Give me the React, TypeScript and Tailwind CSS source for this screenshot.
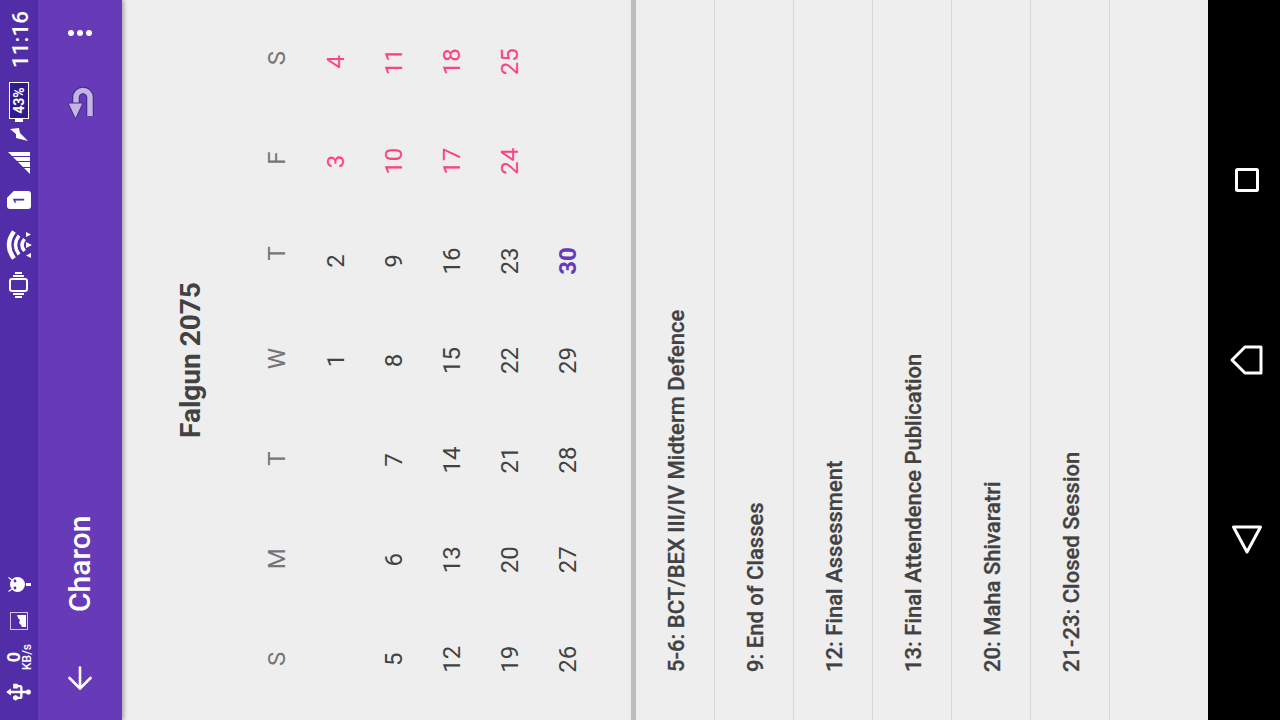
import React from "react";
import { ArrowLeft } from "lucide-react";
import { MdUsb } from "react-icons/md";

const WEEK = ["S", "M", "T", "W", "T", "F", "S"];

const DAYS: (number | null)[] = [
  null, null, null, 1, 2, 3, 4,
  5, 6, 7, 8, 9, 10, 11,
  12, 13, 14, 15, 16, 17, 18,
  19, 20, 21, 22, 23, 24, 25,
  26, 27, 28, 29, 30, null, null,
];

const EVENTS = [
  "5-6: BCT/BEX III/IV Midterm Defence",
  "9: End of Classes",
  "12: Final Assessment",
  "13: Final Attendence Publication",
  "20: Maha Shivaratri",
  "21-23: Closed Session",
];

function StatusBar() {
  return (
    <div className="flex h-[38px] shrink-0 items-center bg-[#512da8] pl-[14px] text-white">
      <MdUsb className="h-[28px] w-[28px] shrink-0" />
      <div className="ml-[6px] flex w-[30px] flex-col items-center">
        <span className="text-[18px] font-bold leading-[15px]">0</span>
        <span className="text-[12px] font-medium leading-[12px]">KB/s</span>
      </div>
      <svg viewBox="0 0 18 18" className="ml-[12px] h-[18px] w-[18px] shrink-0" fill="none">
        <rect x="0.5" y="0.5" width="17" height="17" stroke="#d1c4e9" />
        <path d="M3 16 V12 L5 11 L7 9 L10 10 L12 8 L15 7 V16 Z" fill="#fff" />
      </svg>
      {/* debug bridge droid */}
      <svg viewBox="0 0 24 26" className="ml-[15px] h-[26px] w-[24px] shrink-0" fill="#fff">
        <circle cx="12.5" cy="11.5" r="7.5" />
        <circle cx="9" cy="9" r="1.4" fill="#512da8" />
        <circle cx="16" cy="9" r="1.4" fill="#512da8" />
        <path d="M8 6 L5.5 2.5 M17 6 L19.5 2.5" stroke="#fff" strokeWidth="1.2" />
        <rect x="11" y="20" width="3" height="5" />
      </svg>

      {/* vibrate */}
      <svg viewBox="0 0 30 28" className="ml-[273px] h-[28px] w-[30px] shrink-0" fill="none" stroke="#fff" strokeWidth="2">
        <rect x="9" y="5" width="12" height="17" rx="2" />
        <path d="M6 8 V19 M3 10 V17 M24 8 V19 M27 10 V17" />
      </svg>
      {/* wifi with data arrows */}
      <svg viewBox="0 0 30 28" className="ml-[10px] h-[28px] w-[30px] shrink-0" fill="none" stroke="#fff">
        <path d="M1.5 9 Q15 -1 28.5 9" strokeWidth="4.5" />
        <path d="M5.5 14 Q15 7 24.5 14" strokeWidth="3.5" />
        <path d="M9 19.5 Q15 14.5 21 19.5" strokeWidth="3.5" />
        <path d="M23 21 H28 L25.5 26 Z M12 21 H18 L15 27 Z M2 26 H7 L4.5 21 Z" fill="#fff" stroke="none" />
      </svg>
      <div className="ml-[21px] flex h-[24px] w-[18px] shrink-0 items-center justify-center rounded-[3px] bg-white text-[14px] font-medium leading-none text-[#512da8] [clip-path:polygon(0_0,62%_0,100%_28%,100%_100%,0_100%)]">
        1
      </div>
      <svg viewBox="0 0 22 22" className="ml-[17px] h-[22px] w-[22px] shrink-0" fill="#fff">
        <path d="M0 22 L22 0 V22 Z" />
        <path d="M6.5 14 V22 M12.5 8 V22 M17.5 3 V22" stroke="#512da8" strokeWidth="1" />
      </svg>
      <svg viewBox="0 0 14 18" className="ml-[10px] h-[18px] w-[14px] shrink-0" fill="#fff">
        <path d="M13 0 L14 9 L9 10 L1 18 L4 6 L8 6 Z" />
      </svg>
      <div className="ml-[6px] flex h-[20px] w-[40px] shrink-0 items-center">
        <div className="h-[8px] w-[3px] bg-white" />
        <div className="flex h-[20px] flex-1 items-center justify-center border border-white bg-[#311b92] text-[14px] font-bold leading-none text-white">
          43%
        </div>
      </div>
      <span className="mt-[3px] ml-[14px] text-[22.5px] font-medium leading-none">11:16</span>
    </div>
  );
}

function AppBar() {
  return (
    <div className="relative z-10 flex h-[84px] shrink-0 items-center bg-[#673ab7] text-white shadow-[0_2px_4px_rgba(0,0,0,0.3)]">
      <ArrowLeft className="ml-[24px] h-[36px] w-[36px] shrink-0" strokeWidth={1.75} />
      <span className="ml-[48px] text-[30px] font-medium leading-none">Charon</span>
      <svg viewBox="0 0 40 36" className="ml-[393px] h-[36px] w-[40px] shrink-0" fill="none" strokeLinejoin="round">
        <path d="M20 14 H25.6 A7 7 0 0 1 25.6 28 H7" stroke="#3f2a86" strokeWidth="7.5" />
        <path d="M20 14 H25.6 A7 7 0 0 1 25.6 28 H7" stroke="#c5b3e6" strokeWidth="5.5" />
        <path d="M4 13.5 L20 6 V21 Z" fill="#c5b3e6" stroke="#3f2a86" strokeWidth="1" />
      </svg>
      <div className="ml-[47px] flex flex-col gap-[3px]">
        <div className="h-[6px] w-[6px] rounded-full bg-white" />
        <div className="h-[6px] w-[6px] rounded-full bg-white" />
        <div className="h-[6px] w-[6px] rounded-full bg-white" />
      </div>
    </div>
  );
}

function Calendar() {
  return (
    <div className="flex h-[509px] shrink-0 flex-col pt-[40px]">
      <h1 className="flex h-[58px] items-center justify-center text-[28px] font-bold text-[#424242]">Falgun 2075</h1>
      <div className="mt-[28px] grid grid-cols-7 pr-[8px] pl-[11px]">
        {WEEK.map((d, i) => (
          <div
            key={i}
            className={`flex h-[58px] items-center justify-center text-[24px] text-[#757575] ${i === 4 ? "pl-[10px]" : ""}`}
          >
            {d}
          </div>
        ))}
      </div>
      <div className="mt-[1px] grid grid-cols-7 pr-[12px] pl-[11px]">
        {DAYS.map((d, i) => {
          const weekend = i % 7 >= 5;
          const today = d === 30;
          return (
            <div
              key={i}
              className={`flex h-[58px] items-center justify-center text-[24px] ${
                today ? "font-bold text-[#673ab7]" : weekend ? "text-[#ff4081]" : "text-[#424242]"
              }`}
            >
              {d}
            </div>
          );
        })}
      </div>
    </div>
  );
}

function EventList() {
  return (
    <div className="flex-1 border-t-[5px] border-[#bdbdbd]">
      {EVENTS.map((e) => (
        <div key={e} className="flex h-[79px] items-center border-b border-[#d6d6d6] pt-[3px] pl-[48px] text-[22px] font-medium text-[#424242] [-webkit-text-stroke:0.3px_#424242]">
          {e}
        </div>
      ))}
    </div>
  );
}

function NavBar() {
  return (
    <div className="flex h-[72px] shrink-0 items-center justify-center gap-[132px] bg-black pt-[6px]">
      <svg viewBox="0 0 48 48" className="h-[48px] w-[48px]" fill="none" stroke="#fff" strokeWidth="3" strokeLinejoin="round">
        <path d="M12 24 L37 10.5 V37.5 Z" />
      </svg>
      <svg viewBox="0 0 48 48" className="h-[48px] w-[48px]" fill="none" stroke="#fff" strokeWidth="3" strokeLinejoin="round">
        <path d="M24 9 L37 22 V38 H11 V22 Z" />
      </svg>
      <svg viewBox="0 0 48 48" className="h-[48px] w-[48px]" fill="none" stroke="#fff" strokeWidth="3" strokeLinejoin="round">
        <rect x="13.5" y="13.5" width="21" height="21" rx="1" />
      </svg>
    </div>
  );
}

export default function App() {
  return (
    <div className="h-[720px] w-[1280px] overflow-hidden">
      <div className="flex h-[1280px] w-[720px] origin-top-left translate-y-[720px] -rotate-90 flex-col bg-[#eeeeee] font-['Roboto',sans-serif]">
        <StatusBar />
        <AppBar />
        <Calendar />
        <EventList />
        <NavBar />
      </div>
    </div>
  );
}
